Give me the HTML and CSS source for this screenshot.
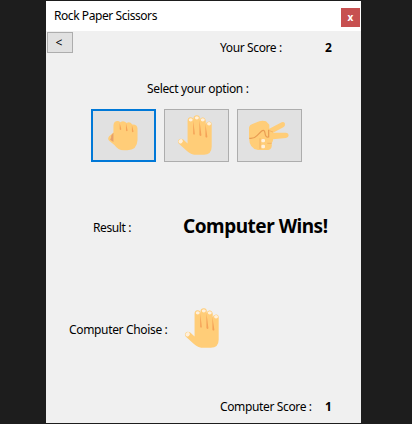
FILE: index.html
```html
<!DOCTYPE html>
<html lang="en">
<head>
<meta charset="utf-8">
<title>Rock Paper Scissors</title>
<link rel="stylesheet" href="styles.css">
</head>
<body>
<svg class="defs" aria-hidden="true">
  <symbol id="palm" viewBox="48 24 112 126">
    <path fill="#ffcd78" d="M80 110V44Q80 33 89 33T98 42V35Q99 27 108 27T117 36V42Q118 33 126 34T135 44V54Q137 46 145 46T153 56V122Q153 147 129 147H109Q90 147 79 136L53 113Q48 107 53 101Q59 96 66 100L80 113Z"/>
    <g fill="#f5a257"><path d="M97 42L102 84Q100 88 97 84Z"/><path d="M116 42L122 88Q119 92 116 87Z"/><path d="M134 53L140 93Q137 97 134 92Z"/></g>
    <g fill="#fff0dc"><ellipse cx="89.500" cy="41" rx="6" ry="5"/><ellipse cx="108" cy="35" rx="6" ry="5"/><ellipse cx="126" cy="41" rx="6" ry="5"/><ellipse cx="145" cy="53" rx="6" ry="5"/><ellipse cx="59" cy="106" rx="7" ry="6" transform="rotate(-35 59 106)"/></g>
  </symbol>
</svg>
<main class="window">
  <header class="titlebar"><span class="title">Rock Paper Scissors</span><button class="close">x</button></header>
  <section class="score-row">
    <button class="back">&lt;</button>
    <span class="your-score">Your Score :</span><b class="score">2</b>
  </section>
  <p class="prompt">Select your option :</p>
  <section class="options">
    <button class="option selected" aria-label="Rock">
      <svg class="rock" viewBox="58 40 96 94">
        <path fill="#ffcd78" d="M77 78V56Q78 43 90 43Q94 43 98 47Q107 39 117 49Q127 43 134 54Q149 53 150 66V101Q149 132 119 132H108Q91 132 80 116L64 103Q58 96 64 89Z"/>
        <path fill="#f5a257" d="M96 49L101 68Q98 73 96 68ZM115 50L120 72Q117 76 115 71ZM133 55L138 75Q135 80 133 74Z"/>
        <path fill="#e7a06b" d="M77 79V107L67 100Q72 93 70 88Z"/>
      </svg>
    </button>
    <button class="option" aria-label="Paper"><svg class="paper"><use href="#palm"/></svg></button>
    <button class="option" aria-label="Scissors">
      <svg class="scissors" viewBox="42 36 126 99">
        <path fill="#ffcd78" d="M45 92V62Q46 53 57 50L76 43Q85 40 96 43L106 53V65L143 46Q151 43 153 50Q154 57 148 61L117 77H156Q164 78 164 85T156 93L117 97Q118 103 113 109Q116 126 103 129H72Q46 125 45 92Z"/>
        <path fill="none" stroke="#e99c52" stroke-width="3.500" stroke-linejoin="round" d="M46 94Q60 96 69 86L83 72Q91 66 93 78Q94 92 104 90L104 68"/>
        <path fill="none" stroke="#f1ad62" stroke-width="2.500" d="M78 94V126M106 71L117 75M100 109H113"/>
        <g fill="#fff0dc"><rect x="82" y="96" width="11" height="10" rx="4"/><rect x="82" y="113" width="11" height="11" rx="4"/></g>
      </svg>
    </button>
  </section>
  <section class="result-row"><span class="result-label">Result :</span><strong class="result">Computer Wins!</strong></section>
  <section class="choice-row"><span class="choice-label">Computer Choise :</span><svg class="choice"><use href="#palm"/></svg></section>
  <footer class="computer-row"><span class="computer-score">Computer Score :</span><b class="score">1</b></footer>
</main>
</body>
</html>
```
FILE: styles.css
```css
* { box-sizing: border-box; }
body { margin: 0; height: 424px; overflow: hidden; padding: 1px 51px 1px 46px; background: #1d1d1d; color: #000; font: 12px/18px "Noto Sans", "Open Sans", sans-serif; }
.defs { display: none; }
.window { width: 315px; height: 422px; background: #f0f0f0; white-space: nowrap; }
button { font: inherit; color: #000; padding: 0; display: flex; align-items: center; justify-content: center; border: 1px solid #adadad; background: #e1e1e1; }
svg { display: block; flex: none; }
.titlebar { height: 30px; background: #fff; display: flex; justify-content: space-between; padding: 6px 1px 0 8px; }
.title { letter-spacing: -.43px; }
.close { width: 19px; height: 19px; margin-top: 1px; border: 0; background: #c75050; color: #fff; font-size: 10px; font-weight: 700; line-height: 16px; padding-bottom: 1px; }
.score-row { height: 49px; display: flex; align-items: flex-start; padding: 1px 0 0 1px; }
.back { width: 26px; height: 21px; padding-right: 2px; }
.your-score { width: 105px; margin: 7px 0 0 147px; letter-spacing: -.38px; }
.score { font-weight: 700; }
.score-row .score { margin-top: 7px; }
.prompt { margin: 0; height: 29px; padding-left: 101px; letter-spacing: -.34px; }
.options { display: flex; gap: 8px; padding-left: 45px; }
.option { width: 65px; height: 53px; padding: 0 2px 1px 0; }
.selected { border: 2px solid #0078d7; }
.rock { width: 32px; height: 31px; }
.paper, .choice { width: 37px; height: 42px; }
.scissors { width: 42px; height: 33px; }
.result-row { height: 145px; padding: 50px 0 0 47px; display: flex; }
.result-label { width: 90px; padding-top: 7px; letter-spacing: -.4px; }
.result { font-size: 19px; line-height: 28px; letter-spacing: -.48px; }
.choice-row { height: 91px; display: flex; padding-left: 23px; }
.choice-label { width: 115px; padding-top: 14px; letter-spacing: -.34px; }
.computer-row { display: flex; padding-left: 174px; }
.computer-score { width: 105px; letter-spacing: -.36px; }
```
